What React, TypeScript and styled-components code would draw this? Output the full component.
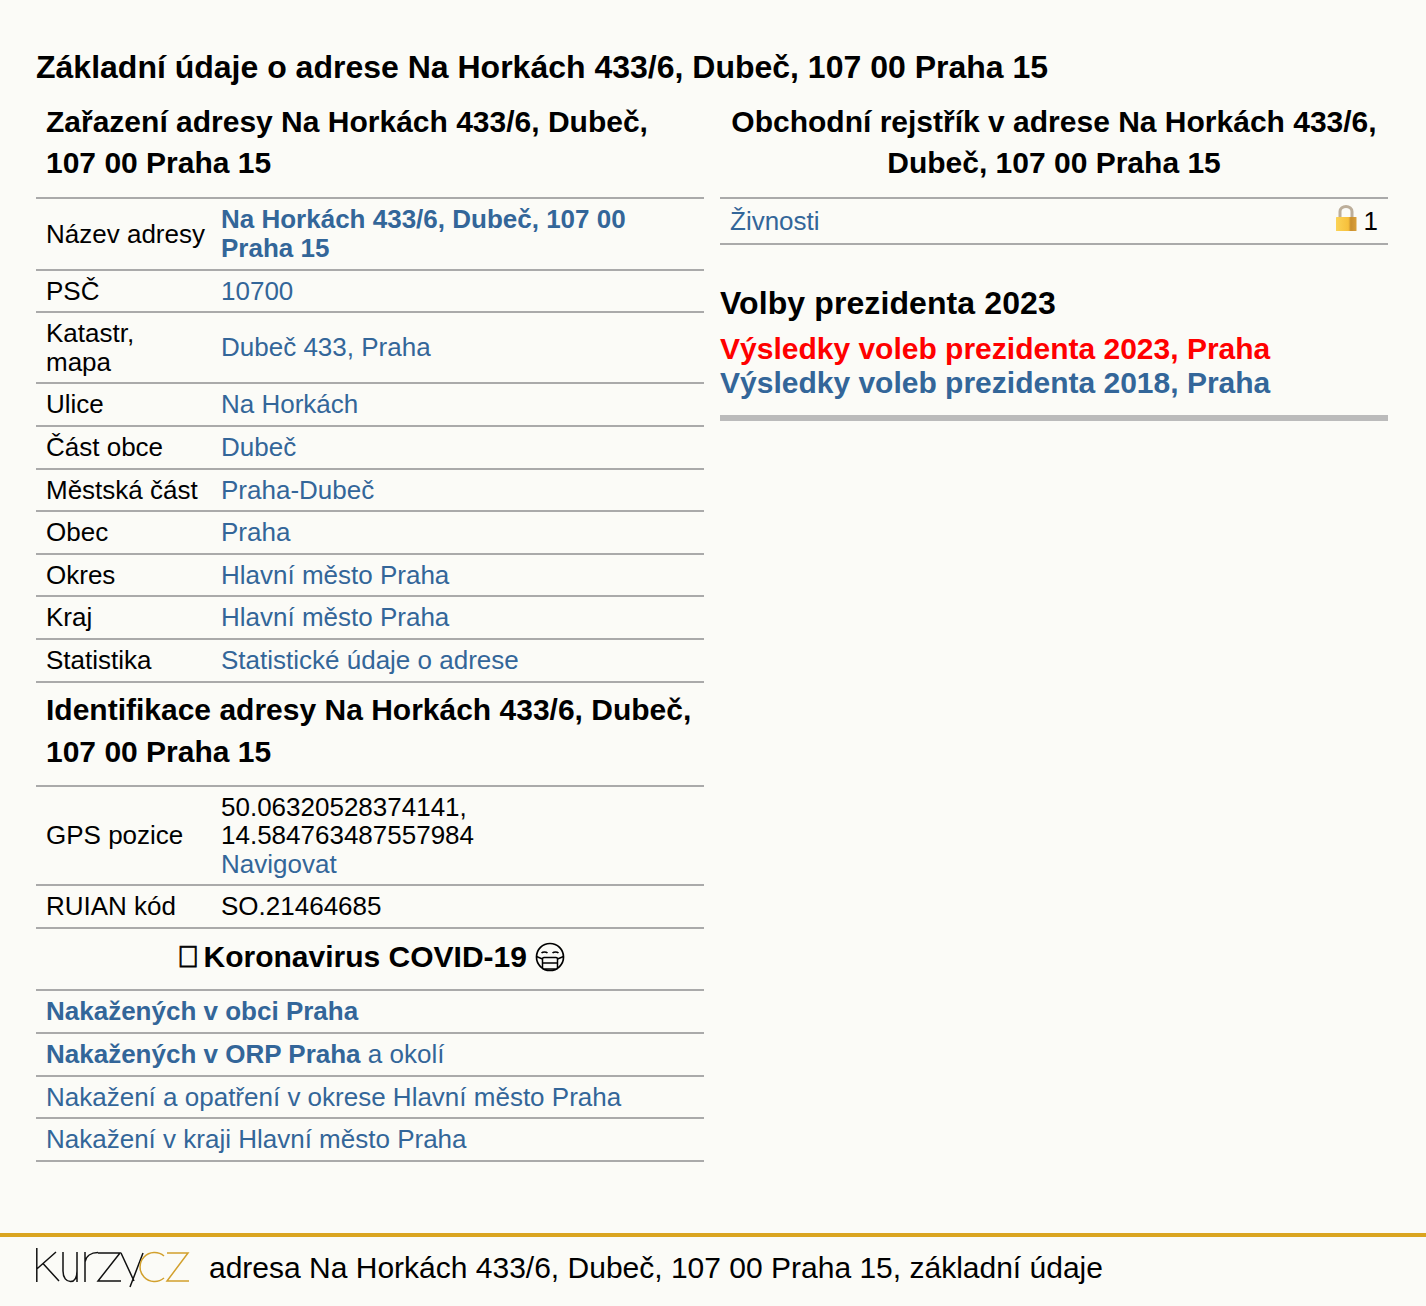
import React from 'react'
import styled, { createGlobalStyle } from 'styled-components'

const GlobalStyle = createGlobalStyle`
  html, body {
    margin: 0;
    padding: 0;
    background: #fbfbf7;
    color: #000;
    font-family: "Liberation Sans", Arial, sans-serif;
    font-size: 26px;
  }
  a {
    color: #369;
    text-decoration: none;
  }
`

const Page = styled.div`
  min-height: 1306px;
  display: flex;
  flex-direction: column;
`

const Main = styled.main`
  flex: 1;
  padding: 48px 38px 0 36px;
`

const Title = styled.h1`
  font-size: 32px;
  line-height: 38px;
  font-weight: bold;
  margin: 0 0 14.9px;
`

const Columns = styled.div`
  display: grid;
  grid-template-columns: 668px 668px;
  gap: 16px;
`

const SectionHeading = styled.h2<{ $center?: boolean }>`
  font-size: 30px;
  line-height: 41.6px;
  font-weight: bold;
  margin: 0;
  padding: 0 10px 13.3px;
  text-align: ${({ $center }) => ($center ? 'center' : 'left')};
`

const Table = styled.table`
  width: 100%;
  border-collapse: collapse;
  table-layout: fixed;
`

const RuledTable = styled(Table)`
  border-top: 2px solid #aaa;
`

const Row = styled.tr`
  border-bottom: 2px solid #aaa;
`

const LabelCell = styled.td`
  width: 185px;
  box-sizing: border-box;
  padding: 6px 15px 6px 10px;
  line-height: 28.6px;
  vertical-align: middle;
`

const ValueCell = styled.td`
  padding: 6px 10px 6px 0;
  line-height: 28.6px;
  vertical-align: middle;
`

const GpsCell = styled(ValueCell)`
  padding-bottom: 5px;
`

const RuianCell = styled(ValueCell)`
  padding-bottom: 7px;
`

const WideCell = styled.td`
  padding: 6.05px 10px;
  line-height: 28.6px;
`

const HeadingCell = styled.td`
  padding: 6.4px 10px 12px;
`

const StrongLink = styled.a`
  font-weight: bold;
`

const TableHeading = styled.h2`
  font-size: 30px;
  line-height: 42px;
  font-weight: bold;
  margin: 0;
`

const CovidHeading = styled.div`
  display: flex;
  justify-content: center;
  align-items: center;
  gap: 8px;
  font-size: 30px;
  line-height: 36px;
  font-weight: bold;
  padding: 10px 2px 14px 0;
`

const MissingGlyph = styled.span`
  -webkit-text-stroke: 0.8px #000;
  position: relative;
  left: 4px;
`

const TradeRow = styled.div`
  display: flex;
  justify-content: space-between;
  align-items: center;
  padding: 6px 10px;
  line-height: 28.6px;
  border-top: 2px solid #aaa;
  border-bottom: 2px solid #aaa;
`

const LockCount = styled.span`
  display: inline-flex;
  align-items: center;
  gap: 7px;
`

const LockSvg = styled.svg`
  margin-bottom: 6px;
`

const ElectionBlock = styled.section`
  margin-top: 37px;
  padding-bottom: 15px;
  border-bottom: 6px solid #bbb;
`

const ElectionTitle = styled.h2`
  font-size: 32px;
  line-height: 42px;
  font-weight: bold;
  letter-spacing: 0.1px;
  margin: 0 0 8px;
`

const ElectionLink = styled.a<{ $red?: boolean }>`
  display: block;
  font-size: 30px;
  line-height: 34px;
  font-weight: bold;
  color: ${({ $red }) => ($red ? '#f00' : '#369')};
`

const Footer = styled.footer`
  display: flex;
  align-items: center;
  gap: 19px;
  height: 73px;
  box-sizing: border-box;
  padding: 0 0 8px 36px;
  border-top: 4px solid #daa520;
  font-size: 30px;
`

const LockIcon = () => (
  <LockSvg width="22" height="26" viewBox="0 0 22 26">
    <defs>
      <linearGradient id="lockBody" x1="0" x2="1" y1="0" y2="0">
        <stop offset="0" stopColor="#fbd356" />
        <stop offset="0.6" stopColor="#f7c03c" />
        <stop offset="0.72" stopColor="#c98f2e" />
        <stop offset="1" stopColor="#d99f3a" />
      </linearGradient>
    </defs>
    <path d="M5 13V6.5a6 5 0 0 1 12 0V13" fill="none" stroke="#bcae9a" strokeWidth="3" />
    <rect x="1" y="12" width="20.5" height="14" rx="0.5" fill="url(#lockBody)" />
  </LockSvg>
)

const MaskFace = () => (
  <svg width="30" height="30" viewBox="0 0 30 30" fill="none" stroke="#000" strokeWidth="1.5">
    <circle cx="15" cy="15" r="13.5" strokeWidth="1.7" />
    <path d="M6.5 11C8 9.5 11 9.5 12.5 11M17.5 11C19 9.5 22 9.5 23.5 11" />
    <rect x="7.5" y="15.5" width="15" height="11.5" rx="1.5" fill="#fbfbf7" />
    <path d="M1.5 14.5L7.5 17M28.5 14.5L22.5 17M7.5 21H22.5" />
  </svg>
)

const KurzyLogo = () => (
  <svg width="154" height="40" viewBox="0 0 154 40" fill="none" strokeWidth="1.5">
    <g stroke="#111">
      <path d="M0.8 0V34M0.8 21L20 4M7 15.5L23 33" />
      <path d="M27 4V23C27 30 30.5 33.5 34.5 33.5C38.5 33.5 41 30 41 23M41 4V34" />
      <path d="M49 34V4M49 14C50 8 55 4.5 62 4.5" />
      <path d="M62 5H84L62 33H85" />
      <path d="M85 5L98 33M107 5L94 39" />
    </g>
    <g stroke="#d2a02c">
      <path d="M128 8A14.5 14.5 0 1 0 128 30" />
      <path d="M131 5H152L131 33H153" />
    </g>
  </svg>
)

const addressRows: { label: string; value: React.ReactNode }[] = [
  { label: 'Název adresy', value: <StrongLink href="#">Na Horkách 433/6, Dubeč, 107 00 Praha 15</StrongLink> },
  { label: 'PSČ', value: <a href="#">10700</a> },
  { label: 'Katastr, mapa', value: <a href="#">Dubeč 433, Praha</a> },
  { label: 'Ulice', value: <a href="#">Na Horkách</a> },
  { label: 'Část obce', value: <a href="#">Dubeč</a> },
  { label: 'Městská část', value: <a href="#">Praha-Dubeč</a> },
  { label: 'Obec', value: <a href="#">Praha</a> },
  { label: 'Okres', value: <a href="#">Hlavní město Praha</a> },
  { label: 'Kraj', value: <a href="#">Hlavní město Praha</a> },
  { label: 'Statistika', value: <a href="#">Statistické údaje o adrese</a> },
]

const App: React.FC = () => (
  <Page>
    <GlobalStyle />
    <Main>
      <Title>Základní údaje o adrese Na Horkách 433/6, Dubeč, 107 00 Praha 15</Title>
      <Columns>
        <div>
          <SectionHeading>Zařazení adresy Na Horkách 433/6, Dubeč, 107 00 Praha 15</SectionHeading>
          <RuledTable>
            <tbody>
              {addressRows.map((row) => (
                <Row key={row.label}>
                  <LabelCell>{row.label}</LabelCell>
                  <ValueCell>{row.value}</ValueCell>
                </Row>
              ))}
            </tbody>
          </RuledTable>
          <Table>
            <tbody>
              <tr>
                <HeadingCell colSpan={2}>
                  <TableHeading>Identifikace adresy Na Horkách 433/6, Dubeč, 107 00 Praha 15</TableHeading>
                </HeadingCell>
              </tr>
            </tbody>
          </Table>
          <RuledTable>
            <tbody>
              <Row>
                <LabelCell>GPS pozice</LabelCell>
                <GpsCell>
                  50.06320528374141, 14.584763487557984
                  <br />
                  <a href="#">Navigovat</a>
                </GpsCell>
              </Row>
              <Row>
                <LabelCell>RUIAN kód</LabelCell>
                <RuianCell>SO.21464685</RuianCell>
              </Row>
            </tbody>
          </RuledTable>
          <CovidHeading>
            <MissingGlyph>{'\uE000'}</MissingGlyph>
            <span>Koronavirus COVID-19</span>
            <MaskFace />
          </CovidHeading>
          <RuledTable>
            <tbody>
              <Row>
                <WideCell><StrongLink href="#">Nakažených v obci Praha</StrongLink></WideCell>
              </Row>
              <Row>
                <WideCell><StrongLink href="#">Nakažených v ORP Praha</StrongLink> <a href="#">a okolí</a></WideCell>
              </Row>
              <Row>
                <WideCell><a href="#">Nakažení a opatření v okrese Hlavní město Praha</a></WideCell>
              </Row>
              <Row>
                <WideCell><a href="#">Nakažení v kraji Hlavní město Praha</a></WideCell>
              </Row>
            </tbody>
          </RuledTable>
        </div>
        <div>
          <SectionHeading $center>Obchodní rejstřík v adrese Na Horkách 433/6, Dubeč, 107 00 Praha 15</SectionHeading>
          <TradeRow>
            <a href="#">Živnosti</a>
            <LockCount><LockIcon />1</LockCount>
          </TradeRow>
          <ElectionBlock>
            <ElectionTitle>Volby prezidenta 2023</ElectionTitle>
            <ElectionLink $red href="#">Výsledky voleb prezidenta 2023, Praha</ElectionLink>
            <ElectionLink href="#">Výsledky voleb prezidenta 2018, Praha</ElectionLink>
          </ElectionBlock>
        </div>
      </Columns>
    </Main>
    <Footer>
      <KurzyLogo />
      <span>adresa Na Horkách 433/6, Dubeč, 107 00 Praha 15, základní údaje</span>
    </Footer>
  </Page>
)

export default App
